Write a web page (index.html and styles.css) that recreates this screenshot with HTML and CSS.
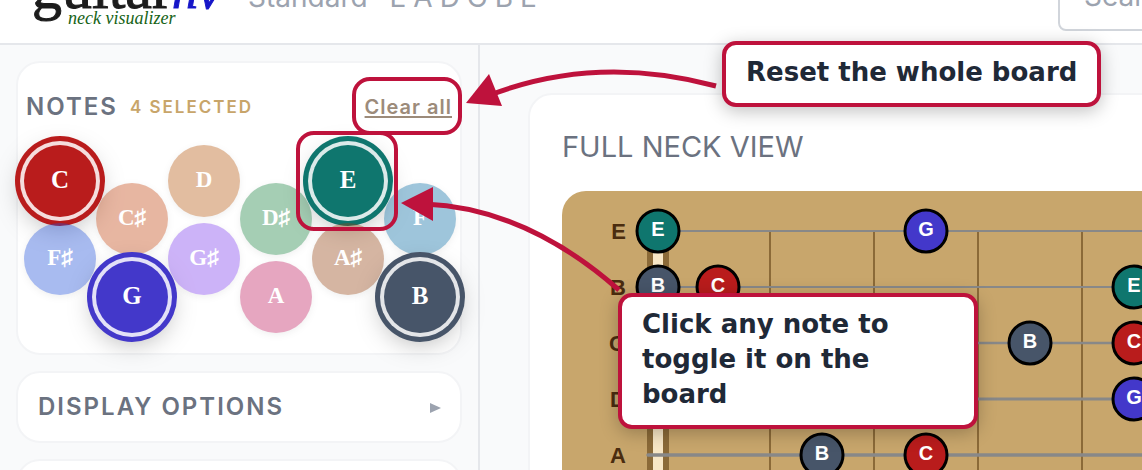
FILE: index.html
```html
<!DOCTYPE html>
<html lang="en">
<head>
    <meta charset="UTF-8">
    <meta name="viewport" content="width=device-width, initial-scale=1.0">
    <title>guitarnv - neck visualizer</title>
    <link rel="stylesheet" href="styles.css">
</head>
<body>
    <header class="topbar">
        <div class="logo">
            <div class="logo-name">guitar<em>nv</em></div>
            <div class="logo-tagline">neck visualizer</div>
        </div>
        <div class="tuning">Standard <span class="tuning-notes">EADGBE</span></div>
        <input class="search" type="text" placeholder="Search chords" aria-label="Search chords">
    </header>

    <div class="layout">
        <aside class="sidebar">
            <section class="panel notes-panel">
                <div class="notes-header">
                    <h2 class="panel-title">NOTES</h2>
                    <span class="selected-count">4 SELECTED</span>
                    <button type="button" class="clear-all">Clear all</button>
                </div>
                <div class="note-grid">
                    <div class="note-col">
                        <button type="button" class="note note-c selected">C</button>
                        <button type="button" class="note note-fs">F♯</button>
                    </div>
                    <div class="note-col low">
                        <button type="button" class="note note-cs">C♯</button>
                        <button type="button" class="note note-g selected">G</button>
                    </div>
                    <div class="note-col">
                        <button type="button" class="note note-d">D</button>
                        <button type="button" class="note note-gs">G♯</button>
                    </div>
                    <div class="note-col low">
                        <button type="button" class="note note-ds">D♯</button>
                        <button type="button" class="note note-a">A</button>
                    </div>
                    <div class="note-col">
                        <button type="button" class="note note-e selected">E</button>
                        <button type="button" class="note note-as">A♯</button>
                    </div>
                    <div class="note-col low">
                        <button type="button" class="note note-f">F</button>
                        <button type="button" class="note note-b selected">B</button>
                    </div>
                </div>
            </section>

            <section class="panel">
                <button type="button" class="panel-toggle">
                    <span class="panel-title">DISPLAY OPTIONS</span>
                    <svg class="chevron" width="12" height="12" viewBox="0 0 12 12"><path d="M0 2 L11 7 L0 12 Z" fill="#9ca3af"/></svg>
                </button>
            </section>

            <section class="panel panel-empty"></section>
        </aside>

        <main class="content">
            <section class="neck-card">
                <h2 class="neck-title">FULL NECK VIEW</h2>
                <div class="board">
                    <svg width="1400" height="360" viewBox="0 0 1400 360">
                        <!-- nut -->
                        <rect x="85" y="40" width="22" height="280" fill="#8b6a38"/>
                        <rect x="91" y="40" width="10" height="280" fill="#f8e7c6"/>
                        <!-- frets -->
                        <g class="frets">
                            <path d="M208 40V320M312 40V320M416 40V320M520 40V320M624 40V320M728 40V320"/>
                        </g>
                        <!-- strings -->
                        <g class="strings">
                            <path d="M86 40H1400" stroke-width="2"/>
                            <path d="M86 96H1400" stroke-width="2"/>
                            <path d="M86 152H1400" stroke-width="2.5"/>
                            <path d="M86 208H1400" stroke-width="3"/>
                            <path d="M86 264H1400" stroke-width="3.5"/>
                            <path d="M86 320H1400" stroke-width="4"/>
                        </g>
                        <g class="string-names">
                            <text x="64" y="48">E</text>
                            <text x="64" y="104">B</text>
                            <text x="64" y="160">G</text>
                            <text x="64" y="216">D</text>
                            <text x="64" y="272">A</text>
                        </g>
                        <g class="dots">
                            <circle cx="96" cy="40" r="21" fill="#0f766e"/><text x="96" y="45">E</text>
                            <circle cx="364" cy="40" r="21" fill="#4338ca"/><text x="364" y="45">G</text>
                            <circle cx="96" cy="96" r="21" fill="#475569"/><text x="96" y="101">B</text>
                            <circle cx="156" cy="96" r="21" fill="#b91c1c"/><text x="156" y="101">C</text>
                            <circle cx="572" cy="96" r="21" fill="#0f766e"/><text x="572" y="101">E</text>
                            <circle cx="468" cy="152" r="21" fill="#475569"/><text x="468" y="157">B</text>
                            <circle cx="572" cy="152" r="21" fill="#b91c1c"/><text x="572" y="157">C</text>
                            <circle cx="572" cy="208" r="21" fill="#4338ca"/><text x="572" y="213">G</text>
                            <circle cx="260" cy="264" r="21" fill="#475569"/><text x="260" y="269">B</text>
                            <circle cx="364" cy="264" r="21" fill="#b91c1c"/><text x="364" y="269">C</text>
                        </g>
                    </svg>
                </div>
            </section>
        </main>
    </div>

    <!-- help overlay -->
    <div class="ring ring-clear"></div>
    <div class="ring ring-note"></div>
    <svg class="arrows" width="760" height="320" viewBox="0 0 760 320">
        <path class="arrow-line" d="M716 86 Q597 54 490 95"/>
        <path class="arrow-head" d="M466 103 L489 74 L502 106 Z"/>
        <path class="arrow-line" d="M619 290 Q526 208 425 204"/>
        <path class="arrow-head" d="M401 203 L433 187 L433 221 Z"/>
    </svg>
    <div class="callout callout-clear">Reset the whole board</div>
    <div class="callout callout-note">Click any note to toggle it on the board</div>
</body>
</html>
```
FILE: styles.css
```css
* {
    margin: 0;
    padding: 0;
    box-sizing: border-box;
}

body {
    position: relative;
    height: 100vh;
    overflow: hidden;
    display: flex;
    flex-direction: column;
    background-color: #f9fafb;
    font-family: 'Inter', sans-serif;
    color: #6b7280;
}

button {
    border: none;
    background: none;
    cursor: pointer;
    font-family: inherit;
}

/* Top bar, scrolled so that only its lower part shows */
.topbar {
    flex: none;
    height: 45px;
    padding: 0 0 12px 32px;
    display: flex;
    align-items: flex-end;
    background-color: #fff;
    border-bottom: 2px solid #e5e7eb;
}

.logo {
    width: 188px;
    margin-right: 28px;
    font-family: 'Liberation Serif', serif;
}

.logo-name {
    font-size: 60px;
    line-height: 50px;
    color: #1c1c1c;
    white-space: nowrap;
    -webkit-text-stroke: 1px #1c1c1c;
}

.logo-name em {
    font-size: 52px;
    color: #1616c8;
    -webkit-text-stroke: 1px #1616c8;
}

.logo-tagline {
    padding: 0 0 3px 36px;
    margin-top: -8px;
    font-size: 18px;
    line-height: 20px;
    font-style: italic;
    color: #166316;
}

.tuning {
    flex: 1;
    padding-bottom: 17px;
    font-size: 28px;
    line-height: 34px;
    color: #9ca3af;
    white-space: nowrap;
}

.tuning-notes {
    margin-left: 14px;
    letter-spacing: 7px;
}

.search {
    flex: none;
    width: 300px;
    height: 64px;
    margin-right: -216px;
    padding: 0 24px 6px;
    border: 2px solid #d1d5db;
    border-radius: 8px;
    font-family: inherit;
    font-size: 28px;
}

.search::placeholder {
    color: #9ca3af;
}

.layout {
    flex: 1;
    min-height: 0;
    display: flex;
}

/* Sidebar */
.sidebar {
    flex: none;
    width: 480px;
    padding: 16px;
    display: flex;
    flex-direction: column;
    gap: 16px;
    border-right: 2px solid #e5e7eb;
}

.panel {
    flex: none;
    background-color: #fff;
    border: 2px solid #f3f4f6;
    border-radius: 24px;
}

.panel-empty {
    height: 72px;
}

.notes-panel {
    padding: 28px 4px 20px 6px;
}

.notes-header {
    display: flex;
    align-items: center;
    height: 32px;
    margin-bottom: 22px;
    padding: 0 4px 0 2px;
}

.panel-title {
    font-size: 24px;
    font-weight: 600;
    line-height: 32px;
    letter-spacing: 2px;
    color: #6b7280;
}

.selected-count {
    margin-left: 12px;
    font-size: 17px;
    font-weight: 600;
    letter-spacing: 2px;
    color: #c8a56a;
}

.clear-all {
    margin-left: auto;
    font-size: 20px;
    font-weight: 600;
    letter-spacing: 1px;
    color: #9c8b7a;
    text-decoration: underline;
    text-decoration-thickness: 2px;
    text-underline-offset: 2px;
}

.note-grid {
    display: flex;
}

.note-col {
    display: flex;
    flex-direction: column;
    gap: 6px;
}

.note-col.low {
    padding-top: 38px;
}

.note {
    --note: #475569;
    position: relative;
    width: 72px;
    height: 72px;
    padding-bottom: 2px;
    border-radius: 50%;
    background-color: var(--note);
    color: #fff;
    font-family: 'Liberation Serif', serif;
    font-size: 23px;
    font-weight: bold;
    opacity: 0.38;
    box-shadow: 0 2px 6px rgba(0, 0, 0, 0.15);
}

.note.selected {
    opacity: 1;
    font-size: 25px;
    box-shadow: 0 0 0 4px rgba(255, 255, 255, 0.85), 0 0 0 9px var(--note), 0 8px 28px rgba(0, 0, 0, 0.35);
}

.note-c { --note: #b91c1c; }
.note-cs { --note: #c2410c; }
.note-d { --note: #b45309; }
.note-ds { --note: #15803d; }
.note-e { --note: #0f766e; }
.note-f { --note: #0369a1; }
.note-fs { --note: #1d4ed8; }
.note-g { --note: #4338ca; }
.note-gs { --note: #7c3aed; }
.note-a { --note: #be185d; }
.note-as { --note: #92400e; }
.note-b { --note: #475569; }

.panel-toggle {
    width: 100%;
    padding: 18px 18px 18px 20px;
    display: flex;
    align-items: center;
    justify-content: space-between;
}

/* Neck */
.content {
    flex: 1;
    min-width: 0;
    padding: 48px;
}

.neck-card {
    width: max-content;
    padding: 32px;
    background-color: #fff;
    border: 2px solid #f3f4f6;
    border-radius: 24px;
}

.neck-title {
    margin-bottom: 24px;
    font-size: 29px;
    font-weight: 400;
    line-height: 40px;
    color: #6b7280;
}

.board {
    background-color: #c8a66c;
    border-radius: 24px;
    overflow: hidden;
}

.board svg {
    display: block;
}

.frets {
    fill: none;
    stroke: #8b6a38;
    stroke-width: 2;
}

.strings {
    stroke: #888;
    stroke-linecap: round;
}

.string-names,
.dots text {
    font-family: 'Liberation Sans', Arial, sans-serif;
    font-weight: bold;
}

.string-names {
    font-size: 22px;
    text-anchor: end;
    fill: #4a2c0f;
}

.dots circle {
    stroke: #000;
    stroke-width: 3;
}

.dots text {
    font-size: 20px;
    text-anchor: middle;
    fill: #fff;
}

/* Help overlay */
.ring {
    position: absolute;
    border: 4px solid #be123c;
    border-radius: 18px;
    pointer-events: none;
}

.ring-clear {
    left: 352px;
    top: 77px;
    width: 110px;
    height: 58px;
}

.ring-note {
    left: 296px;
    top: 131px;
    width: 102px;
    height: 100px;
}

.arrows {
    position: absolute;
    left: 0;
    top: 0;
    pointer-events: none;
}

.arrow-line {
    fill: none;
    stroke: #be123c;
    stroke-width: 5;
}

.arrow-head {
    fill: #be123c;
}

.callout {
    position: absolute;
    padding: 10px 20px 13px;
    background-color: #fff;
    border: 4px solid #be123c;
    border-radius: 14px;
    box-shadow: 0 4px 18px rgba(0, 0, 0, 0.25);
    font-family: 'DejaVu Sans', sans-serif;
    font-size: 26px;
    font-weight: bold;
    line-height: 35px;
    color: #1f2937;
}

.callout-clear {
    left: 722px;
    top: 41px;
    white-space: nowrap;
}

.callout-note {
    left: 618px;
    top: 293px;
    width: 360px;
}
```
